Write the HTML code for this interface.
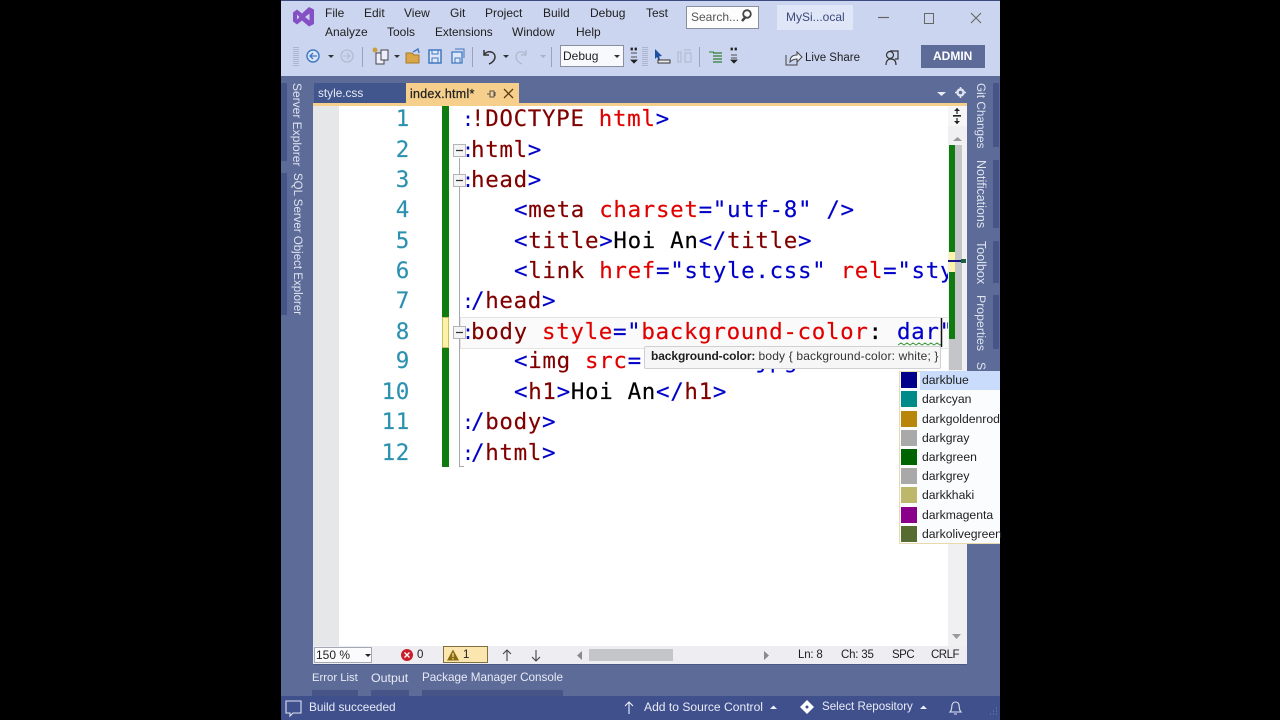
<!DOCTYPE html>
<html><head><meta charset="utf-8"><title>Visual Studio</title>
<style>
html,body{margin:0;padding:0;background:#000;width:1280px;height:720px;overflow:hidden}
#w{position:absolute;left:281px;top:0;width:719px;height:720px;background:#5d6b99;overflow:hidden;font-family:"Liberation Sans",sans-serif}
#root{position:absolute;left:0;top:0;width:1280px;height:720px;overflow:hidden}
.a{position:absolute}
.t{position:absolute;white-space:nowrap;font-family:"Liberation Sans",sans-serif;font-size:12px;line-height:16px;color:#1e1e1e}
.w{color:#e8ebf5}
.v{position:absolute;white-space:nowrap;font-family:"Liberation Sans",sans-serif;font-size:12px;line-height:14px;color:#dfe3f0;transform-origin:0 0;transform:rotate(90deg)}
#code{position:absolute;left:313px;top:106px;width:635px;height:540px;overflow:hidden;background:#fff}
.l{position:absolute;white-space:pre;font-family:"DejaVu Sans Mono",monospace;font-size:22.5px;letter-spacing:.65px;line-height:30px;color:#000;-webkit-text-stroke:.15px currentColor}
.n{color:#2b91af;text-align:right;width:60px;left:37px}
.b{color:#0000c8}.m{color:#800000}.r{color:#e00000}
.c{position:absolute;left:149px;color:#0000c8;font-family:"DejaVu Sans Mono",monospace;font-size:20px;line-height:30px}
.s{position:absolute;left:901px;width:16px;height:16px}
.p{position:absolute;left:922px;font-family:"Liberation Sans",sans-serif;font-size:12.2px;line-height:16px;color:#1e1e1e;white-space:nowrap}
.st{font-size:11.5px;letter-spacing:-.2px}
</style></head><body><div id="root">
<div id="w"></div>
<!-- top chrome -->
<div class="a" style="left:281px;top:0;width:719px;height:1px;background:#3b4a80"></div>
<div class="a" style="left:281px;top:1px;width:719px;height:75px;background:#ccd5f0"></div>
<div class="t" style="left:325px;top:5px">File</div>
<div class="t" style="left:364px;top:5px">Edit</div>
<div class="t" style="left:404px;top:5px">View</div>
<div class="t" style="left:450px;top:5px">Git</div>
<div class="t" style="left:485px;top:5px">Project</div>
<div class="t" style="left:543px;top:5px">Build</div>
<div class="t" style="left:590px;top:5px">Debug</div>
<div class="t" style="left:646px;top:5px">Test</div>
<div class="t" style="left:325px;top:24px">Analyze</div>
<div class="t" style="left:387px;top:24px">Tools</div>
<div class="t" style="left:435px;top:24px;font-size:11.8px">Extensions</div>
<div class="t" style="left:512px;top:24px">Window</div>
<div class="t" style="left:576px;top:24px">Help</div>
<div class="a" style="left:686px;top:6px;width:71px;height:21px;background:#fdfdfe;border:1px solid #8a8f9e"></div>
<div class="t" style="left:691px;top:9px;color:#555">Search...</div>
<div class="a" style="left:777px;top:5px;width:76px;height:25px;background:#dfe6f8"></div>
<div class="t" style="left:786px;top:9px;color:#3d4a7a">MySi...ocal</div>
<div class="a" style="left:560px;top:45px;width:62px;height:20px;background:#f8f9fc;border:1px solid #8a8f9e"></div>
<div class="t" style="left:563px;top:48px">Debug</div>
<div class="t" style="left:805px;top:50px;font-size:11.5px">Live Share</div>
<div class="a" style="left:921px;top:45px;width:64px;height:23px;background:#5d6b99"></div>
<div class="t" style="left:933px;top:48px;color:#fff;font-weight:bold;font-size:12px">ADMIN</div>
<svg class="a" style="left:0;top:0" width="1280" height="104" viewBox="0 0 1280 104">
<path d="M293 12.500L297 9.500L302 13.500L309 7L314 9.500V24L309 26.500L302 20.500L297 24.500L293 21.500ZM297 14.500v5l2.500-2.500ZM305 17l4.500 3.500v-7Z" fill="#8550c4" fill-rule="evenodd"/>
<path d="M742 21l4-4.500" stroke="#444" stroke-width="2.500"/><circle cx="747" cy="14" r="3.800" fill="none" stroke="#444" stroke-width="1.800"/>
<path d="M878 17.500h11" stroke="#666" stroke-width="1.200"/>
<rect x="924.500" y="13.500" width="9" height="10" fill="none" stroke="#666"/>
<path d="M971 13l10 10M981 13l-10 10" stroke="#666" stroke-width="1.100"/>
<path d="M294 47v20M296 47v20M298 47v20" stroke="#8d95ac" stroke-dasharray="1 1"/>
<circle cx="313" cy="56" r="6" fill="#d8e4f8" stroke="#3f78c0" stroke-width="1.400"/><path d="M317 56h-7M313 53l-3 3 3 3" fill="none" stroke="#3f78c0" stroke-width="1.300"/>
<path d="M328 55h6l-3 3z" fill="#333"/>
<circle cx="347" cy="56" r="6" fill="none" stroke="#b4bccf" stroke-width="1.300"/><path d="M343 56h7M347 53l3 3-3 3" fill="none" stroke="#b4bccf"/>
<path d="M362.500 47v20" stroke="#9aa3bc"/>
<rect x="376" y="53" width="8" height="11" fill="#eef" stroke="#444"/><rect x="381" y="50" width="7" height="10" fill="#eef" stroke="#444"/><circle cx="375" cy="50" r="2.500" fill="#c8a040"/>
<path d="M394 55h6l-3 3z" fill="#333"/>
<path d="M406 53h6l2 2h5v8h-13z" fill="#d9a74a" stroke="#a87a20"/><path d="M413 52l5-3 1 4" fill="none" stroke="#3f78c0" stroke-width="1.400"/>
<path d="M429 50h12v13h-12z" fill="#dfe8fa" stroke="#3f78c0" stroke-width="1.500"/><path d="M432 50h6v4h-6zM432 58h6v5h-6z" fill="none" stroke="#3f78c0"/>
<path d="M452 52h10v11h-10z" fill="#dfe8fa" stroke="#3f78c0" stroke-width="1.300"/><path d="M455 49h9v9" fill="none" stroke="#3f78c0"/><path d="M455 58h5v5h-5z" fill="none" stroke="#3f78c0"/>
<path d="M472.500 47v20" stroke="#9aa3bc"/>
<path d="M484 50v5h5M484 55c3-5 11-4 11 2 0 3-3 6-6 7" fill="none" stroke="#333" stroke-width="1.500"/>
<path d="M503 55h6l-3 3z" fill="#333"/>
<path d="M526 50v5h-5M526 55c-3-5-10-4-10 2 0 3 3 6 6 7" fill="none" stroke="#b0b8cc" stroke-width="1.300"/>
<path d="M540 55h6l-3 3z" fill="#a8b0c4"/>
<path d="M551.500 47v20" stroke="#9aa3bc"/>
<path d="M614 55h6l-3 3z" fill="#333"/>
<path d="M631 48h1.500v2H631zM635 48h1.500v2H635zM631 53h6M631 57h6M631 60h6l-3 3z" stroke="#222" fill="#222" stroke-width=".8"/>
<path d="M643 47v20M645 47v20M647 47v20" stroke="#8d95ac" stroke-dasharray="1 1"/>
<path d="M655 49l7 7-3 .5 1 3-1.500.5-1.500-3-2 2z" fill="#1f4fa0"/><path d="M658 60h12v3h-12z" fill="#eee" stroke="#333"/>
<path d="M678 52h3v10h-3zM684 50h7M685 53h6v9h-6z" fill="none" stroke="#aeb6ca"/>
<path d="M699.500 47v20" stroke="#9aa3bc"/>
<path d="M709 52h5" stroke="#2e7d32"/><path d="M713 53h9M713 56h9M713 59h9M713 62h9" stroke="#2e7d32" stroke-width="1.300"/>
<path d="M731 48h1.500v2H731zM735 48h1.500v2H735zM731 55h6M731 58h6M731 60h6l-3 3z" stroke="#222" fill="#222" stroke-width=".8"/>
<path d="M786 55v10h11v-5" fill="none" stroke="#444"/><path d="M790 62c0-5 3-7 7-7v-3l5 5-5 5v-3c-3 0-5 1-7 3z" fill="#eef2fb" stroke="#444"/>
<path d="M890 51h8v8h-3M886 65c0-4 1.500-6 5-6s5 2 5 6" fill="none" stroke="#333" stroke-width="1.200"/><circle cx="890" cy="55" r="3.500" fill="#ccd5f0" stroke="#333" stroke-width="1.200"/>
</svg>
<!-- rails -->
<div class="a" style="left:281px;top:83px;width:6px;height:78px;background:#465487"></div>
<div class="a" style="left:281px;top:173px;width:6px;height:142px;background:#465487"></div>
<div class="a" style="left:993px;top:83px;width:6px;height:64px;background:#465487"></div>
<div class="a" style="left:993px;top:160px;width:6px;height:68px;background:#465487"></div>
<div class="a" style="left:993px;top:241px;width:6px;height:42px;background:#465487"></div>
<div class="a" style="left:993px;top:295px;width:6px;height:54px;background:#465487"></div>
<div class="v" style="left:304px;top:83px">Server Explorer</div>
<div class="v" style="left:304px;top:173px;font-size:11.5px">SQL Server Object Explorer</div>
<div class="v" style="left:988px;top:83px;font-size:11.8px">Git Changes</div>
<div class="v" style="left:988px;top:160px;font-size:12.5px">Notifications</div>
<div class="v" style="left:988px;top:241px;font-size:12.5px">Toolbox</div>
<div class="v" style="left:988px;top:295px;font-size:12.3px">Properties</div>
<div class="v" style="left:988px;top:362px">S</div>
<!-- tabs -->
<div class="a" style="left:314px;top:83px;width:92px;height:21px;background:#40568d"></div>
<div class="t w" style="left:318px;top:85px;font-size:11.8px">style.css</div>
<div class="a" style="left:406px;top:83px;width:113px;height:23px;background:#f5cf8b"></div>
<div class="a" style="left:313px;top:103px;width:654px;height:3px;background:#f5cf8b"></div>
<div class="t" style="left:410px;top:86px;color:#222;-webkit-text-stroke:.25px #222;font-size:12.5px;letter-spacing:.25px">index.html*</div>
<svg class="a" style="left:0;top:0" width="1280" height="110" viewBox="0 0 1280 110">
<path d="M487 94h3M490 91v6h4v-6zM494 92.500h1v3h-1" fill="none" stroke="#555"/>
<path d="M504 89l9 9M513 89l-9 9" stroke="#5a3a10" stroke-width="1.300"/>
<path d="M937 92h9l-4.500 4z" fill="#e8ebf5"/>
<circle cx="960.500" cy="92.500" r="3" fill="none" stroke="#dfe3f0" stroke-width="2.400"/>
<path d="M960.500 87v2M960.500 96v2M955 92.500h2M964 92.500h2" stroke="#dfe3f0" stroke-width="1.500"/>
</svg>
<!-- editor -->
<div id="code">
<div class="a" style="left:0;top:0;width:26px;height:540px;background:#e6e7e8"></div>
<div class="a" style="left:129px;top:0;width:7px;height:361px;background:#107c10"></div>
<div class="a" style="left:129px;top:211px;width:7px;height:31px;background:#fdf3a8;box-shadow:inset 0 0 0 1px #c8c060"></div>
<div class="a" style="left:146px;top:52px;width:1px;height:308px;background:#a8a8a8"></div>
<div class="a" style="left:146px;top:360px;width:5px;height:1px;background:#a8a8a8"></div>
<div class="a" style="left:147px;top:211px;width:488px;height:30px;border:1px solid #e4e4e4;box-sizing:content-box;background:#fafafa"></div>

<div class="l n" style="top:-2px">1</div>
<div class="l n" style="top:29px">2</div>
<div class="l n" style="top:59px">3</div>
<div class="l n" style="top:89px">4</div>
<div class="l n" style="top:120px">5</div>
<div class="l n" style="top:150px">6</div>
<div class="l n" style="top:180px">7</div>
<div class="l n" style="top:211px">8</div>
<div class="l n" style="top:240px">9</div>
<div class="l n" style="top:271px">10</div>
<div class="l n" style="top:301px">11</div>
<div class="l n" style="top:332px">12</div>

<div class="c" style="top:-2px">:</div><div class="c" style="top:29px">:</div><div class="c" style="top:59px">:</div><div class="c" style="top:180px">:</div><div class="c" style="top:211px">:</div><div class="c" style="top:301px">:</div><div class="c" style="top:332px">:</div>

<div class="l" style="left:158px;top:-2px"><span class="m">!DOCTYPE</span> <span class="r">html</span><span class="b">&gt;</span></div>
<div class="l m" style="left:158px;top:29px">html<span class="b">&gt;</span></div>
<div class="l m" style="left:158px;top:59px">head<span class="b">&gt;</span></div>
<div class="l" style="left:201px;top:89px"><span class="b">&lt;</span><span class="m">meta</span> <span class="r">charset</span><span class="b">="utf-8" /&gt;</span></div>
<div class="l" style="left:201px;top:120px"><span class="b">&lt;</span><span class="m">title</span><span class="b">&gt;</span>Hoi An<span class="b">&lt;/</span><span class="m">title</span><span class="b">&gt;</span></div>
<div class="l" style="left:201px;top:150px"><span class="b">&lt;</span><span class="m">link</span> <span class="r">href</span><span class="b">="style.css"</span> <span class="r">rel</span><span class="b">="stylesheet"</span></div>
<div class="l" style="left:158px;top:180px"><span class="b">/</span><span class="m">head</span><span class="b">&gt;</span></div>
<div class="l" style="left:158px;top:211px"><span class="m">body</span> <span class="r">style</span><span class="b">="</span><span class="r">background-color</span>: <span class="b">dar"</span></div>
<div class="l" style="left:201px;top:240px"><span class="b">&lt;</span><span class="m">img</span> <span class="r">src</span><span class="b">=<span style="visibility:hidden">"hoi-an.</span>jpg</span></div>
<div class="l" style="left:201px;top:271px"><span class="b">&lt;</span><span class="m">h1</span><span class="b">&gt;</span>Hoi An<span class="b">&lt;/</span><span class="m">h1</span><span class="b">&gt;</span></div>
<div class="l" style="left:158px;top:301px"><span class="b">/</span><span class="m">body</span><span class="b">&gt;</span></div>
<div class="l" style="left:158px;top:332px"><span class="b">/</span><span class="m">html</span><span class="b">&gt;</span></div>

<svg class="a" style="left:0;top:0" width="635" height="380" viewBox="0 0 635 380">
<g fill="#f4f4f4" stroke="#b4b4b4"><rect x="140.500" y="38.500" width="12" height="12"/><rect x="140.500" y="68.500" width="12" height="12"/><rect x="140.500" y="220.500" width="12" height="12"/></g>
<path d="M143 44.500h7M143 74.500h7M143 226.500h7" stroke="#333" stroke-width="1.300"/>
<path d="M585 239l3-2 3 2 3-2 3 2 3-2 3 2 3-2 3 2 3-2 3 2 3-2 3 2 3-2 3 2 2-1" fill="none" stroke="#3a9a3a" stroke-width="1"/>
<path d="M628.500 212v29" stroke="#111" stroke-width="1.500"/>
</svg>
</div>
<!-- tooltip -->
<div class="a" style="left:644px;top:346px;width:295px;height:21px;background:#f6f6f7;border:1px solid #cfd0d4;border-radius:2px"></div>
<div class="t" style="left:651px;top:348px;font-size:12px;letter-spacing:-.1px;color:#1e1e1e"><b style="font-weight:bold">background-color:</b> <span style="letter-spacing:.16px;color:#333">body { background-color: white; }</span></div>
<!-- scrollbar -->
<div class="a" style="left:948px;top:106px;width:19px;height:540px;background:#f0f0f2"></div>
<div class="a" style="left:948px;top:106px;width:19px;height:20px;background:#f6f6f6"></div>
<svg class="a" style="left:948px;top:106px" width="19" height="40" viewBox="0 0 19 40">
<path d="M9 2v6M9 12v6M5 10h8" stroke="#222" stroke-width="1.200"/><path d="M6 5l3-3 3 3zM6 15l3 3 3-3z" fill="#222"/><path d="M5 9.500h8" stroke="#222"/>
<path d="M5 35l4.500-4 4.500 4z" fill="#9a9a9a"/>
</svg>
<div class="a" style="left:949px;top:145px;width:13px;height:225px;background:#c4c5c8"></div>
<div class="a" style="left:949px;top:145px;width:6px;height:194px;background:#107c10"></div>
<div class="a" style="left:949px;top:252px;width:6px;height:20px;background:#fdf3a8"></div>
<div class="a" style="left:948px;top:260px;width:17px;height:2px;background:#14148c"></div>
<div class="a" style="left:961px;top:259px;width:5px;height:4px;background:#1f6040"></div>
<svg class="a" style="left:950px;top:630px" width="16" height="14" viewBox="0 0 16 14"><path d="M2 4h9l-4.500 5z" fill="#9a9a9a"/></svg>
<!-- completion popup -->
<div class="a" style="left:899px;top:371px;width:101px;height:173px;background:#fbfcfe;border-left:1px solid #e7d9b0;border-bottom:1px solid #e7d9b0;border-top:1px solid #e7d9b0;box-sizing:border-box"></div>
<div class="a" style="left:920px;top:371px;width:80px;height:19px;background:#c9dcfb"></div>
<div class="s" style="top:372px;background:#00008b"></div><div class="p" style="top:372px">darkblue</div>
<div class="s" style="top:391px;background:#008b8b"></div><div class="p" style="top:391px">darkcyan</div>
<div class="s" style="top:411px;background:#b8860b"></div><div class="p" style="top:411px">darkgoldenrod</div>
<div class="s" style="top:430px;background:#a9a9a9"></div><div class="p" style="top:430px">darkgray</div>
<div class="s" style="top:449px;background:#006400"></div><div class="p" style="top:449px">darkgreen</div>
<div class="s" style="top:468px;background:#a9a9a9"></div><div class="p" style="top:468px">darkgrey</div>
<div class="s" style="top:487px;background:#bdb76b"></div><div class="p" style="top:487px">darkkhaki</div>
<div class="s" style="top:507px;background:#8b008b"></div><div class="p" style="top:507px">darkmagenta</div>
<div class="s" style="top:526px;background:#556b2f"></div><div class="p" style="top:526px">darkolivegreen</div>
<!-- editor status -->
<div class="a" style="left:313px;top:646px;width:654px;height:18px;background:#eeeef2"></div>
<div class="a" style="left:314px;top:647px;width:58px;height:16px;background:#fbfbfd;border:1px solid #a4a8b4;box-sizing:border-box"></div>
<div class="t" style="left:316px;top:647px;font-size:12px">150 %</div>
<div class="a" style="left:443px;top:646px;width:45px;height:17px;background:#fbe6b0;border:1px solid #807040;box-sizing:border-box"></div>
<div class="t" style="left:417px;top:647px;font-size:11.500px">0</div>
<div class="t" style="left:463px;top:647px;font-size:11.500px">1</div>
<div class="t st" style="left:798px;top:647px">Ln: 8</div>
<div class="t st" style="left:841px;top:647px">Ch: 35</div>
<div class="t st" style="left:892px;top:647px;letter-spacing:-.5px">SPC</div>
<div class="t st" style="left:931px;top:647px;letter-spacing:-.5px">CRLF</div>
<div class="a" style="left:589px;top:649px;width:84px;height:12px;background:#c4c5c8"></div>
<svg class="a" style="left:0;top:640px" width="1280" height="30" viewBox="0 0 1280 30">
<path d="M365 14h6l-3 3z" fill="#222"/>
<circle cx="407" cy="15" r="6" fill="#c8202a"/><path d="M404.500 12.500l5 5M409.500 12.500l-5 5" stroke="#fff" stroke-width="1.400"/>
<path d="M453 9.500l6 11h-12z" fill="#8a6a10"/><path d="M453 13v4M453 18v1.500" stroke="#fde9a8" stroke-width="1.200"/>
<path d="M507 21v-11M503 14l4-4 4 4" fill="none" stroke="#444" stroke-width="1.100"/>
<path d="M536 10v11M532 17l4 4 4-4" fill="none" stroke="#444" stroke-width="1.100"/>
<path d="M582 11v9l-5-4.500z" fill="#8a8a8a"/>
<path d="M764 11v9l5-4.500z" fill="#8a8a8a"/>
</svg>
<!-- bottom -->
<div class="a" style="left:313px;top:664px;width:654px;height:1px;background:#4a5886"></div>
<div class="t w" style="left:312px;top:670px;font-size:11.3px">Error List</div>
<div class="t w" style="left:371px;top:670px;font-size:12.4px">Output</div>
<div class="t w" style="left:422px;top:670px;font-size:11.7px">Package Manager Console</div>
<div class="a" style="left:312px;top:690px;width:46px;height:6px;background:#465487"></div>
<div class="a" style="left:371px;top:690px;width:38px;height:6px;background:#465487"></div>
<div class="a" style="left:422px;top:690px;width:141px;height:6px;background:#465487"></div>
<div class="a" style="left:281px;top:696px;width:719px;height:24px;background:#40508d"></div>
<div class="t w" style="left:309px;top:699px;font-size:11.8px">Build succeeded</div>
<div class="t w" style="left:644px;top:699px;font-size:12.1px">Add to Source Control</div>
<div class="t w" style="left:822px;top:699px;font-size:11.6px">Select Repository</div>
<svg class="a" style="left:0;top:696px" width="1280" height="24" viewBox="0 0 1280 24">
<path d="M286 5h15v12h-8l-3 3v-3h-4z" fill="none" stroke="#dfe3f0" stroke-width="1.100"/>
<path d="M629 18V6M625 10l4-4 4 4" fill="none" stroke="#eef" stroke-width="1.100"/>
<path d="M770 13l3.500-3.500 3.500 3.500z" fill="#eef"/>
<path d="M807 4l7 7-7 7-7-7z" fill="#fff"/><circle cx="807" cy="11" r="1.500" fill="#40508d"/>
<path d="M920 13l3.500-3.500 3.500 3.500z" fill="#eef"/>
<path d="M950 16h11c-2-2-1.500-4-2-7-.5-2-2-3-3.500-3s-3 1-3.500 3c-.5 3 0 5-2 7zM954 18h3" fill="none" stroke="#dfe3f0" stroke-width="1.100"/>
<path d="M990 18h1M993 18h1M996 18h1M993 15h1M996 15h1M996 12h1" stroke="#7482b0"/>
</svg>
</div></body></html>
